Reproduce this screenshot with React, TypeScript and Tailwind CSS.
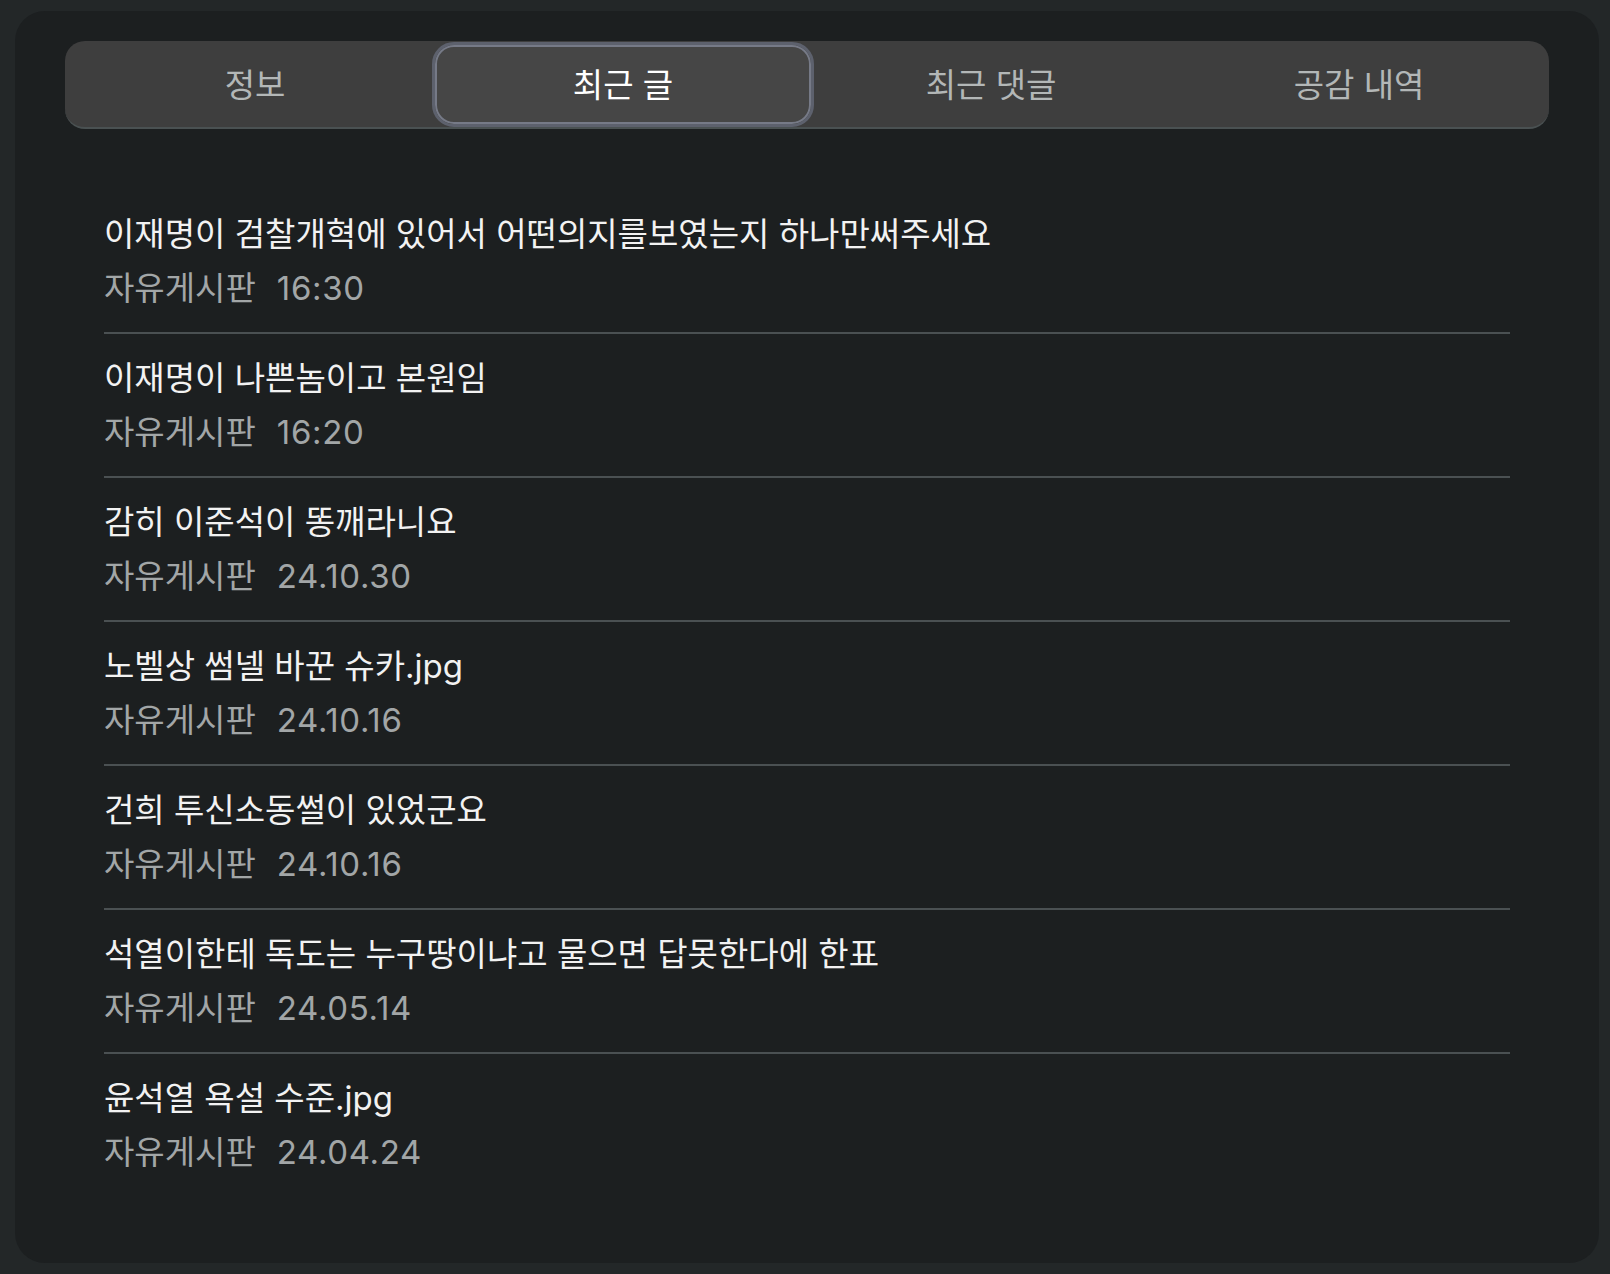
const tabs = ["정보", "최근 글", "최근 댓글", "공감 내역"];

const posts = [
  { title: "이재명이 검찰개혁에 있어서 어떤의지를보였는지 하나만써주세요", board: "자유게시판", date: "16:30" },
  { title: "이재명이 나쁜놈이고 본원임", board: "자유게시판", date: "16:20" },
  { title: "감히 이준석이 똥깨라니요", board: "자유게시판", date: "24.10.30" },
  { title: "노벨상 썸넬 바꾼 슈카.jpg", board: "자유게시판", date: "24.10.16" },
  { title: "건희 투신소동썰이 있었군요", board: "자유게시판", date: "24.10.16" },
  { title: "석열이한테 독도는 누구땅이냐고 물으면 답못한다에 한표", board: "자유게시판", date: "24.05.14" },
  { title: "윤석열 욕설 수준.jpg", board: "자유게시판", date: "24.04.24" },
];

export default function App() {
  const active = 1;

  return (
    <div
      className="min-h-[1274px] bg-[#232728] pt-[11px] pb-[11px] pl-[15px] pr-[11px]"
      style={{ fontFamily: "Inter, 'Noto Sans CJK KR', sans-serif" }}
    >
      <div className="h-[1252px] rounded-[30px] bg-[#1c1f20] px-[50px] pt-[30px]">
        <nav className="grid h-[88px] grid-cols-4 rounded-[20px] border-b-2 border-[#4a5152] bg-[#3e3e3e] px-[6px]">
          {tabs.map((t, i) =>
            i === active ? (
              <button
                key={t}
                className="-mx-[7px] mt-[1px] flex h-[85px] items-center justify-center rounded-[22px] border-[3px] border-[#5d616d] bg-[#464646] pt-[3px] text-[33px] text-white shadow-[inset_0_0_0_2px_#767a87]"
              >
                {t}
              </button>
            ) : (
              <button
                key={t}
                className="flex items-center justify-center pt-[3px] text-[33px] text-[#b3b7b7]"
              >
                {t}
              </button>
            )
          )}
        </nav>

        <ul className="mt-[61px] px-[39px]">
          {posts.map((p, i) => (
            <li
              key={i}
              className={
                i < posts.length - 1
                  ? "border-b-2 border-[#4a5052] py-[24px]"
                  : "py-[24px]"
              }
            >
              <p className="text-[33px] leading-[40px] text-[#f2f2f2]">{p.title}</p>
              <p className="mt-[14px] text-[33px] leading-[40px] text-[#a2a6a7]">
                {p.board}
                <span className="ml-[21px] tracking-[0.02em]">{p.date}</span>
              </p>
            </li>
          ))}
        </ul>
      </div>
    </div>
  );
}
